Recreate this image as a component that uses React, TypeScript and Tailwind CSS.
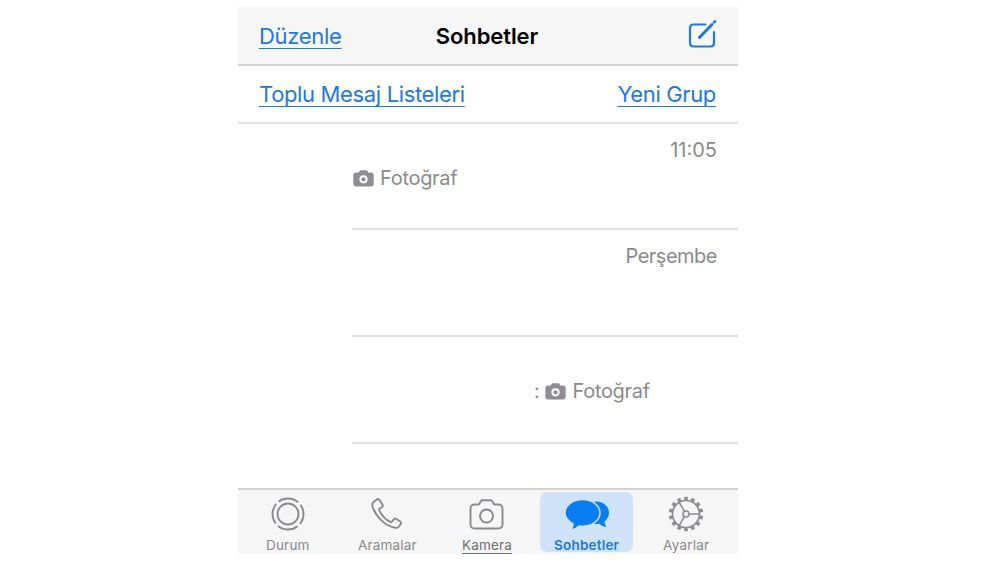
const font = "font-['Inter','Liberation_Sans',sans-serif]";

function CameraGlyph() {
  return (
    <svg width="21" height="17" viewBox="0 0 21 17" className="shrink-0">
      <path
        fill="#8e8e93"
        fillRule="evenodd"
        d="M3 2.500h2.600L7 .6C7.200.3 7.500.2 7.900.2h5.200c.4 0 .7.1.9.4l1.400 1.900H18c1.600 0 2.700 1.100 2.700 2.700v8.600c0 1.600-1.100 2.700-2.700 2.700H3c-1.600 0-2.700-1.100-2.700-2.700V5.200C.3 3.600 1.400 2.500 3 2.500ZM10.500 5.200a4.100 4.100 0 1 0 0 8.200 4.100 4.100 0 0 0 0-8.200Zm0 2a2.100 2.100 0 1 1 0 4.200 2.100 2.100 0 0 1 0-4.200Z"
      />
    </svg>
  );
}

function DurumIcon() {
  return (
    <svg width="34" height="34" viewBox="0 0 34 34" fill="none" stroke="#8a8a8e">
      <circle cx="17" cy="17" r="10.500" strokeWidth="1.900" />
      <circle cx="17" cy="17" r="15.500" strokeWidth="1.900" strokeDasharray="21 3.350" strokeDashoffset="-13.900" />
    </svg>
  );
}

function AramalarIcon() {
  return (
    <svg width="32" height="32" viewBox="0 0 32 32" fill="none" stroke="#8a8a8e" strokeWidth="1.900" strokeLinejoin="round">
      <path d="M2.800 3.600 6.200 1.400c.8-.5 1.600-.3 2.100.4l3.300 5c.5.8.3 1.600-.4 2.200L8.700 10.600c-.6.500-.7 1-.4 1.700 2.400 5.200 6 9 11.100 11.600.7.300 1.200.2 1.700-.4l1.800-2.300c.6-.7 1.400-.9 2.200-.4l4.200 2.700c.9.600 1 1.400.5 2.200l-1.600 2.500c-.9 1.300-2.500 1.900-4.400 1.500C14.500 28 5.300 19.500 1.700 9.200 1 7 1.300 4.700 2.800 3.600Z" />
    </svg>
  );
}

function KameraIcon() {
  return (
    <svg width="35" height="31" viewBox="0 0 35 31" fill="none" stroke="#8a8a8e" strokeWidth="1.900" strokeLinejoin="round">
      <path d="M5.500 5.500h4.300l2-3.300c.4-.7 1-1 1.700-1h8c.7 0 1.300.3 1.700 1l2 3.300h4.300c2.300 0 4 1.700 4 4V25.500c0 2.300-1.700 4-4 4h-24c-2.300 0-4-1.700-4-4V9.500c0-2.300 1.700-4 4-4Z" />
      <circle cx="17.500" cy="17" r="6.500" />
    </svg>
  );
}

function SohbetlerIcon() {
  return (
    <svg width="46" height="32" viewBox="-2 -1 46 32">
      <path fill="#0b7df2" d="M30.500 1.500c7 0 12.500 5 12.500 11.200 0 3.600-1.800 6.700-4.500 8.800.2 2 1 4 2 5.500-2.800-.3-5.300-1.500-7-3.200-1 .2-2 .3-3 .3-7 0-12.500-5-12.500-11.400S23.500 1.500 30.500 1.500Z" />
      <path fill="#0b7df2" stroke="#cfe3f8" strokeWidth="1.500" d="M16.500-.5c9.700 0 17.500 5.900 17.500 13.300s-7.800 13.500-17.500 13.500c-1.200 0-2.400-.1-3.500-.3-2 2.200-5 3.800-8.500 4.300 1.500-1.800 2.300-3.900 2.500-6.300C2.300 21.300-1 17.300-1 12.800-1 5.400 6.800-.5 16.500-.5Z" />
    </svg>
  );
}

function AyarlarIcon() {
  const teeth = Array.from({ length: 14 }, (_, i) => (i * 360) / 14);
  return (
    <svg width="36" height="36" viewBox="0 0 36 36" fill="none" stroke="#8e8e92">
      {teeth.map((a) => (
        <rect key={a} x="16.200" y="0.800" width="3.600" height="4.200" fill="#8e8e92" stroke="none" transform={`rotate(${a} 18 18)`} />
      ))}
      <circle cx="18" cy="18" r="13.500" strokeWidth="1.700" />
      <circle cx="18" cy="18" r="3" strokeWidth="1.600" />
      <path d="M21 18h10.500M16.500 15.400 10.800 5.800M16.500 20.600l-5.700 9.600" strokeWidth="1.600" />
    </svg>
  );
}

const tabs = [
  { label: "Durum", icon: <DurumIcon /> },
  { label: "Aramalar", icon: <AramalarIcon /> },
  { label: "Kamera", icon: <KameraIcon />, underline: true },
  { label: "Sohbetler", icon: <SohbetlerIcon />, active: true },
  { label: "Ayarlar", icon: <AyarlarIcon /> },
];

export default function App() {
  return (
    <div className={`h-[562px] w-[1000px] overflow-hidden bg-white ${font}`}>
      <div className="ml-[238px] flex w-[500px] flex-col pt-[7px]">
        <header className="grid h-[59px] grid-cols-[1fr_auto_1fr] items-center border-b-2 border-[#d2d2d2] bg-[#f6f6f6] pl-[21px] pr-[23px]">
          <a className="justify-self-start text-[22px] leading-none tracking-[-0.3px] text-[#2179de] underline underline-offset-[4px] decoration-1">Düzenle</a>
          <h1 className="text-[22px] font-semibold leading-none tracking-[-0.1px] text-black">Sohbetler</h1>
          <svg width="30" height="30" viewBox="0 0 30 30" fill="none" stroke="#2179de" strokeWidth="2.200" strokeLinecap="round" strokeLinejoin="round" className="-mr-[3px] -mt-[2px] justify-self-end">
            <path d="M17.500 4.500H5.500c-2 0-3.500 1.500-3.500 3.500v15c0 2 1.500 3.500 3.500 3.500h17c2 0 3.500-1.500 3.500-3.500V12" />
            <path d="M11.500 17.500 24 4.500" strokeWidth="3" />
            <path d="M26 2.300 27 1.300" strokeWidth="2.600" />
          </svg>
        </header>
        <div className="flex h-[58px] items-center justify-between border-b-2 border-[#e3e3e3] pl-[21px] pr-[22px] text-[22px] leading-none tracking-[-0.35px] text-[#2179de]">
          <a className="underline underline-offset-[4px] decoration-1">Toplu Mesaj Listeleri</a>
          <a className="underline underline-offset-[4px] decoration-1">Yeni Grup</a>
        </div>
        <div className="flex h-[364px] flex-col pl-[114px] text-[20px] leading-none tracking-[-0.3px] text-[#8a8a8e]">
          <div className="h-[106px] border-b-2 border-[#e0e0e0] pr-[21px] pt-[16px]">
            <p className="text-right tracking-[0px]">11:05</p>
            <p className="mt-[8px] flex items-center gap-[6px] pl-[1px]"><CameraGlyph />Fotoğraf</p>
          </div>
          <div className="h-[107px] border-b-2 border-[#e0e0e0] pr-[21px] pt-[16px]">
            <p className="text-right tracking-[-0.5px]">Perşembe</p>
          </div>
          <div className="h-[107px] border-b-2 border-[#e0e0e0] pt-[44px]">
            <p className="ml-[182px] flex items-center gap-[6px]">:<CameraGlyph />Fotoğraf</p>
          </div>
        </div>
        <nav className="grid h-[66px] grid-cols-5 border-t-2 border-[#d2d2d2] bg-[#f6f6f6] pr-[2px]">
          {tabs.map((t) => (
            <div key={t.label} className={t.active ? "px-[3px] py-[2px]" : ""}>
              <div className={`flex h-full flex-col items-center justify-between ${t.active ? "rounded-[7px] bg-[#cfe3f8]" : "pb-[2px]"}`}>
                <div className={`flex items-center justify-center ${t.active ? "h-[46px]" : "h-[48px]"}`}>{t.icon}</div>
                <span className={`text-[13.500px] leading-none tracking-[0.2px] ${t.active ? "font-semibold text-[#2179de]" : t.underline ? "text-[#6f6f73] underline underline-offset-[3px]" : "text-[#8a8a8e]"}`}>{t.label}</span>
              </div>
            </div>
          ))}
        </nav>
      </div>
    </div>
  );
}
